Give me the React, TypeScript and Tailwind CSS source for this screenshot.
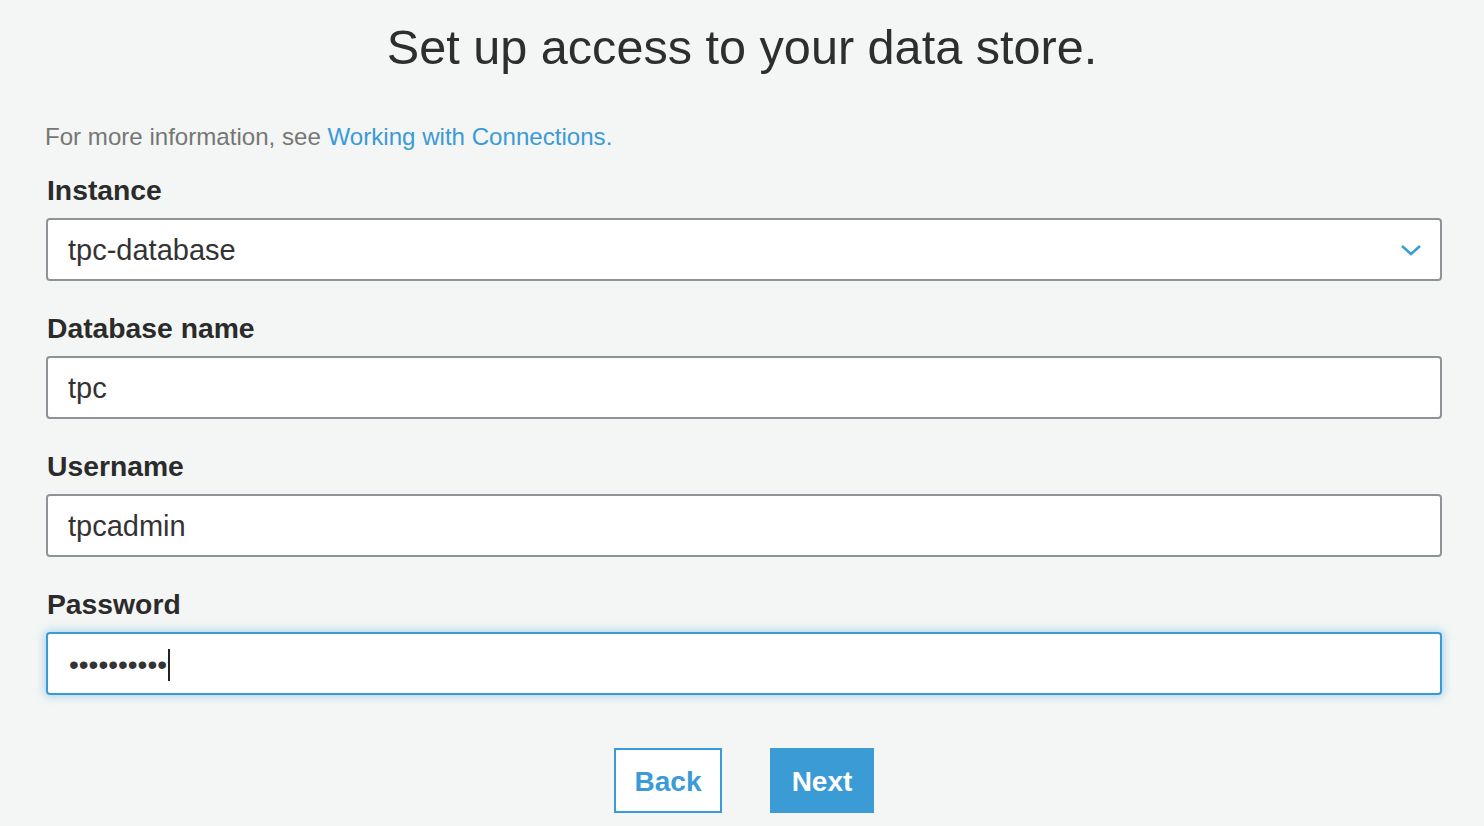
import React from "react";

const font = { fontFamily: '"Liberation Sans", Arial, Helvetica, sans-serif' };

function Label({ children }: { children: React.ReactNode }) {
  return (
    <div className="text-[28.3px] leading-[36px] font-bold text-[#2b2b2b] pl-[1px] mb-[10px] h-[36px]">
      {children}
    </div>
  );
}

function Field({
  children,
  focused = false,
  right,
}: {
  children: React.ReactNode;
  focused?: boolean;
  right?: React.ReactNode;
}) {
  return (
    <div
      className={
        "h-[63px] rounded-[4px] bg-white border-2 flex items-center pl-[20px] pr-[20px] pt-[2px] text-[29px] text-[#333] " +
        (focused
          ? "border-[#3a9bd9] shadow-[0_0_8px_2px_rgba(58,155,217,0.35)]"
          : "border-[#8d9396]")
      }
    >
      <div className="flex-1 flex items-center">{children}</div>
      {right}
    </div>
  );
}

export default function App() {
  return (
    <div className="min-h-[826px] bg-[#f4f6f5] text-[#333]" style={font}>
      <h1 className="pt-[19px] text-center text-[48.6px] leading-[56px] font-normal text-[#2e2e2e]">
        Set up access to your data store.
      </h1>
      <div className="pl-[46px] pr-[42px]">
        <p className="mt-[47px] text-[24.1px] leading-[30px] text-[#767676] -ml-[1px]">
          For more information, see{" "}
          <a className="text-[#3b9ad6]" href="#">
            Working with Connections.
          </a>
        </p>

        <div className="mt-[20px] flex flex-col gap-[29px]">
          <div>
            <Label>Instance</Label>
            <Field
              right={
                <svg width="22" height="14" viewBox="0 0 22 14" className="mr-[-2px] mb-[2px]">
                  <path
                    d="M2 3 L11 11 L20 3"
                    fill="none"
                    stroke="#3a9bd9"
                    strokeWidth="2.6"
                  />
                </svg>
              }
            >
              tpc-database
            </Field>
          </div>
          <div>
            <Label>Database name</Label>
            <Field>tpc</Field>
          </div>
          <div>
            <Label>Username</Label>
            <Field>tpcadmin</Field>
          </div>
          <div>
            <Label>Password</Label>
            <Field focused>
              <span className="text-[28px] text-[#333] ml-[1px]">••••••••••</span>
              <span className="inline-block w-[2px] h-[32px] bg-[#222] ml-[1px]" />
            </Field>
          </div>
        </div>

        <div className="mt-[53px] flex justify-center gap-[48px]">
          <button className="w-[108px] h-[65px] bg-white border-2 border-[#3a9bd9] text-[#3a9bd9] text-[28px] font-bold pt-[3px]">
            Back
          </button>
          <button className="w-[104px] h-[65px] bg-[#3a9bd5] text-white text-[28px] font-bold pt-[3px]">
            Next
          </button>
        </div>
      </div>
    </div>
  );
}
